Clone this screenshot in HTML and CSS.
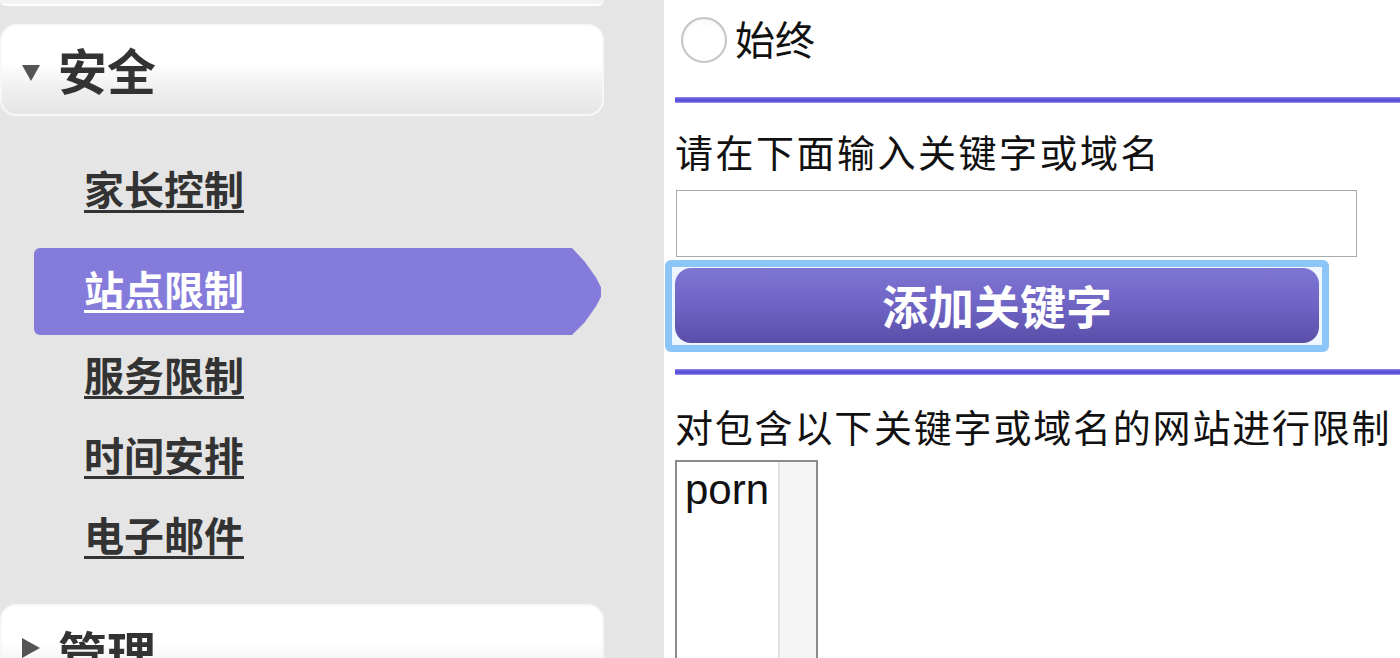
FILE: index.html
```html
<!DOCTYPE html>
<html lang="zh-CN">
<head>
    <meta charset="UTF-8">
    <meta name="viewport" content="width=device-width, initial-scale=1.0">
    <title>站点限制</title>
    <link rel="stylesheet" href="styles.css">
</head>
<body>
    <div class="page">
        <aside class="sidebar">
            <div class="group-tail"></div>

            <div class="group-head">
                <span class="caret caret-down"></span>
                <span>安全</span>
            </div>

            <ul class="menu">
                <li class="menu-item"><a href="#">家长控制</a></li>
                <li class="menu-item active"><a href="#">站点限制</a></li>
                <li class="menu-item"><a href="#">服务限制</a></li>
                <li class="menu-item"><a href="#">时间安排</a></li>
                <li class="menu-item"><a href="#">电子邮件</a></li>
            </ul>

            <div class="group-head group-next">
                <span class="caret caret-right"></span>
                <span>管理</span>
            </div>
        </aside>

        <main class="content">
            <label class="radio-row">
                <input type="radio" name="block" class="radio">
                <span>始终</span>
            </label>

            <div class="rule"></div>

            <p class="field-label">请在下面输入关键字或域名</p>
            <input type="text" class="keyword-input">
            <div class="button-focus">
                <button class="add-button">添加关键字</button>
            </div>

            <div class="rule rule-second"></div>

            <p class="field-label list-label">对包含以下关键字或域名的网站进行限制</p>
            <div class="listbox">
                <div class="options">
                    <div class="option">porn</div>
                </div>
                <div class="track"></div>
            </div>
        </main>
    </div>
</body>
</html>
```

FILE: styles.css
```css
body {
    margin: 0;
    padding: 0;
    height: 658px;
    overflow: hidden;
    font-family: "Noto Sans CJK SC", "Liberation Sans", sans-serif;
    background-color: #fff;
}

.page {
    display: flex;
    height: 658px;
}

/* barra lateral */
.sidebar {
    width: 664px;
    flex-shrink: 0;
    background-color: #e5e5e5;
    overflow: hidden;
}

.group-tail {
    width: 604px;
    height: 6px;
    background-color: #f3f3f3;
    border-bottom: 2px solid #fff;
    border-radius: 0 0 14px 14px;
    box-sizing: border-box;
}

.group-head {
    display: flex;
    align-items: center;
    width: 604px;
    height: 92px;
    margin-top: 18px;
    padding: 0 0 4px 20px;
    box-sizing: border-box;
    border: 2px solid #f7f7f7;
    border-radius: 16px;
    background: linear-gradient(to bottom, #fff 0%, #fff 42%, #ececec 78%, #e6e6e6 100%);
    font-size: 49px;
    font-weight: bold;
    color: #333;
}

.caret {
    display: inline-block;
    width: 0;
    height: 0;
    margin-right: 18px;
}

.caret-down {
    border-left: 9px solid transparent;
    border-right: 9px solid transparent;
    border-top: 16px solid #555;
    margin-top: 10px;
}

.caret-right {
    border-top: 10px solid transparent;
    border-bottom: 10px solid transparent;
    border-left: 18px solid #555;
    margin-top: 22px;
}

.group-next {
    margin-top: 26px;
    align-items: flex-start;
    padding-top: 10px;
}

.menu {
    list-style-type: none;
    margin: 36px 0 0 0;
    padding: 0;
}

.menu-item {
    display: flex;
    align-items: center;
    height: 80px;
    padding: 0 0 8px 84px;
    box-sizing: border-box;
}

.menu-item a {
    font-size: 40px;
    font-weight: bold;
    color: #333;
    text-decoration: underline;
    text-decoration-thickness: 3px;
    text-underline-offset: 5px;
}

.menu-item.active {
    height: 87px;
    width: 567px;
    margin: 16px 0 3px 34px;
    padding-left: 50px;
    background-color: #857bdb;
    border-radius: 6px 0 0 6px;
    clip-path: polygon(0 0, calc(100% - 29px) 0, calc(100% - 16px) 16%, calc(100% - 5px) 34%, 100% 45%, 100% 56%, calc(100% - 5px) 67%, calc(100% - 16px) 85%, calc(100% - 29px) 100%, 0 100%);
}

.menu-item.active a {
    color: #fff;
}

/* area principal */
.content {
    flex: 1;
    min-width: 0;
    padding-left: 11px;
    overflow: hidden;
}

.radio-row {
    display: flex;
    align-items: center;
    height: 82px;
    padding-bottom: 6px;
    box-sizing: border-box;
    font-size: 40px;
    color: #111;
}

.radio {
    appearance: none;
    width: 46px;
    height: 46px;
    margin: 4px 8px 0 6px;
    border: 2px solid #c4c4c4;
    border-radius: 50%;
    background: radial-gradient(circle at 50% 60%, #fff 55%, #f0f0f0 100%);
    box-sizing: border-box;
}

.rule {
    height: 6px;
    margin-top: 15px;
    background: linear-gradient(to bottom, #8e86e6, #5b50d8 40%, #5b50d8 70%, #a39ced);
}

.rule-second {
    margin-top: 17px;
}

.field-label {
    margin: 24px 0 0 0;
    font-size: 38px;
    line-height: 48px;
    letter-spacing: 2.5px;
    color: #111;
    white-space: nowrap;
}

.list-label {
    margin-top: 27px;
    letter-spacing: 1.8px;
}

.keyword-input {
    display: block;
    width: 681px;
    height: 67px;
    margin: 15px 0 0 1px;
    border: 1px solid #aaa;
    box-sizing: border-box;
    outline: none;
}

.button-focus {
    width: 664px;
    margin: 3px 0 0 -10px;
    padding: 1px 3px 2px 3px;
    border: 7px solid #8cc5f7;
    border-radius: 6px;
    background-color: #eef6ff;
    box-sizing: border-box;
}

.add-button {
    display: block;
    width: 644px;
    height: 75px;
    border: none;
    border-radius: 16px;
    background: linear-gradient(to bottom, #7f75d3 0%, #6f64c4 50%, #5a4ea9 100%);
    font-family: "Noto Sans CJK SC", sans-serif;
    font-size: 46px;
    font-weight: bold;
    color: #fff;
    padding: 0 0 4px 0;
    cursor: pointer;
}

.listbox {
    display: flex;
    width: 143px;
    height: 230px;
    margin-top: 10px;
    border: 2px solid #8c8c8c;
    box-sizing: border-box;
}

.options {
    flex: 1;
}

.option {
    padding: 4px 0 0 8px;
    font-family: "Liberation Sans", sans-serif;
    font-size: 42px;
    color: #111;
}

.track {
    width: 36px;
    background-color: #f5f5f5;
    border-left: 2px solid #e2e2e2;
}
```
